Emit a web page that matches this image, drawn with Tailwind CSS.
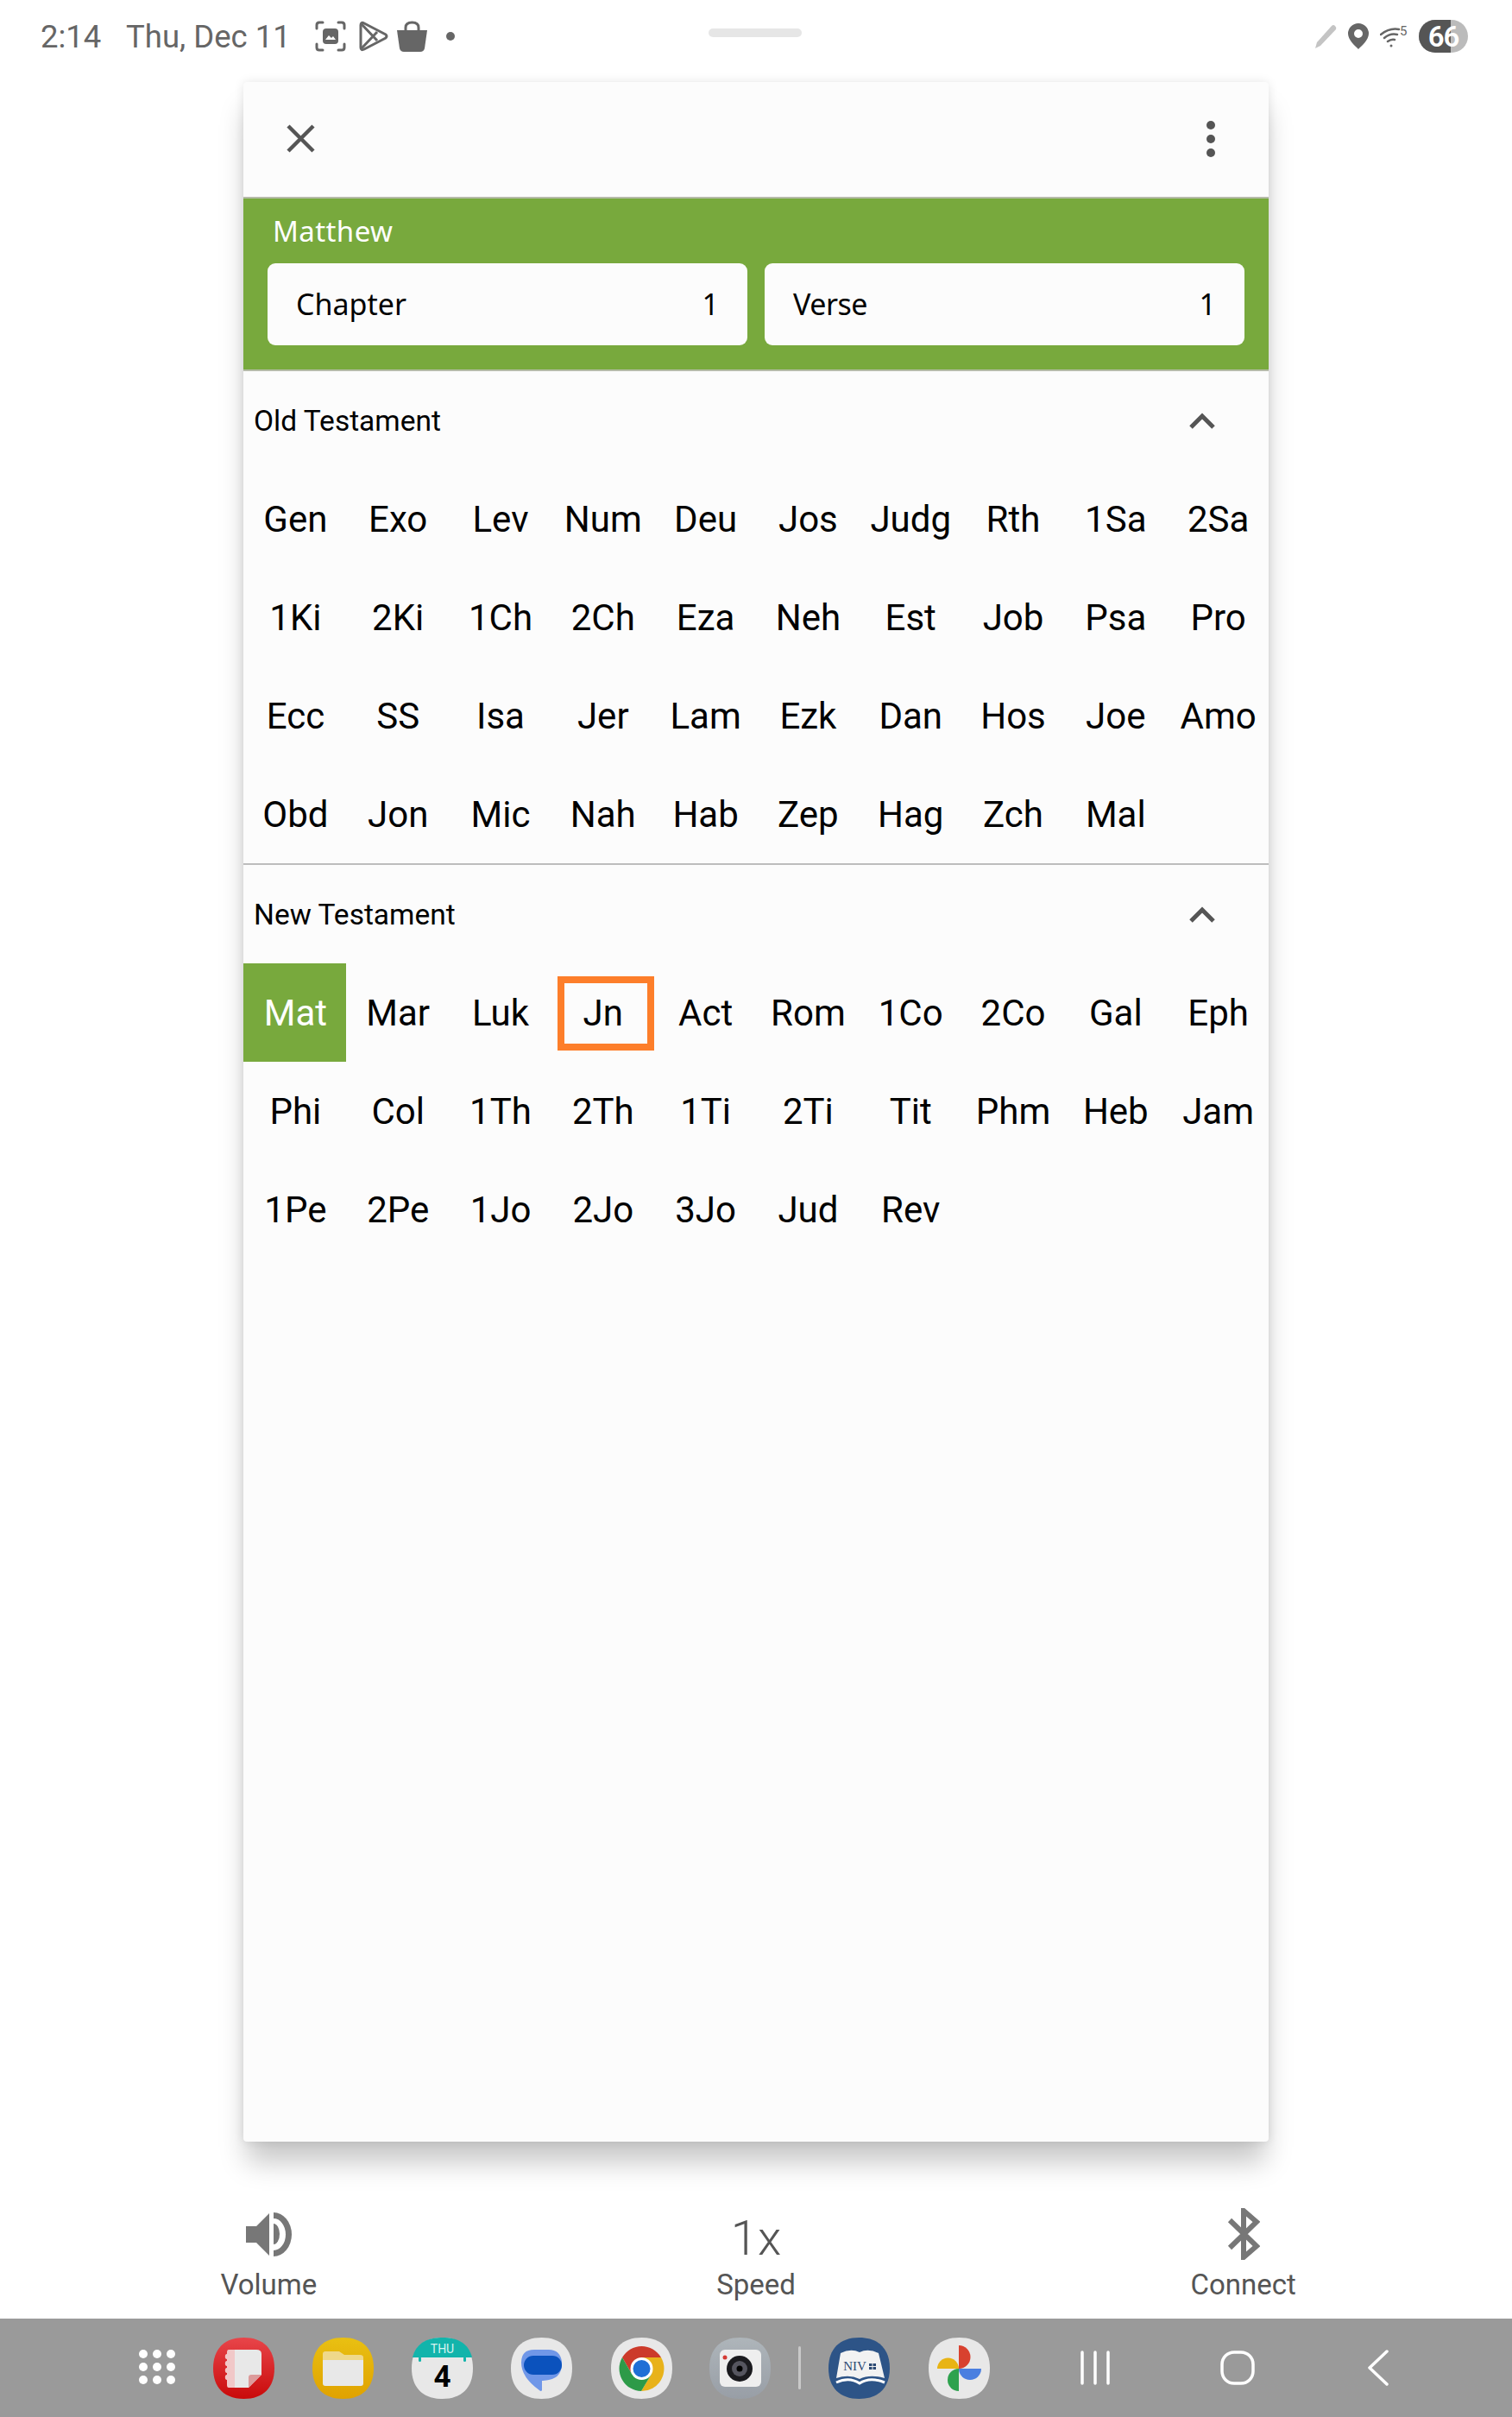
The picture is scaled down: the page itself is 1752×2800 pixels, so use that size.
<!doctype html>
<html><head><meta charset="utf-8"><script src="https://cdn.jsdelivr.net/npm/@tailwindcss/browser@4"></script></head>
<body class="bg-white">
<div class="w-[1752px] h-[2800px] flex flex-col relative overflow-hidden font-['Roboto',sans-serif] bg-white">
  <!-- status bar -->
  <div class="h-[95px] shrink-0 relative flex items-start pl-[47px] pr-[51px] pt-[23px] text-[#666]">
    <div class="flex items-center h-[38px] text-[36.500px]">
      <span class="w-[99px] pt-[2px]">2:14</span>
      <span class="w-[219px] pt-[2px]">Thu, Dec 11</span>
      <svg class="w-[36px] h-[36px]" viewBox="0 0 36 36" fill="none" stroke="#666" stroke-width="3" stroke-linecap="round"><path d="M2 9V5q0-3 3-3h4M27 2h4q3 0 3 3v4M34 27v4q0 3-3 3h-4M9 34H5q-3 0-3-3v-4"/><rect x="9" y="9" width="18" height="18" rx="4" fill="#666" stroke="none"/><path d="M12 22l4-5 3 3 2-2 3 4z" fill="#fff" stroke="none"/></svg>
      <svg class="w-[35px] h-[36px] ml-[14px]" viewBox="0 0 35 36" fill="none" stroke="#666" stroke-width="3" stroke-linejoin="round"><path d="M3 5q0-4 4-2l25 13q2 2 0 4L7 33q-4 2-4-2z"/><path d="M4 4l18 19M4 32l18-19"/></svg>
      <svg class="w-[35px] h-[36px] ml-[10px]" viewBox="0 0 35 36"><path d="M0 11h35l-3 21q-1 4-5 4H8q-4 0-5-4z" fill="#666"/><path d="M10 12V8q0-6 7.500-6T25 8v4" fill="none" stroke="#666" stroke-width="3"/></svg>
      <span class="w-[10px] h-[10px] rounded-full bg-[#666] ml-[22px]"></span>
    </div>
    <div class="absolute left-[821px] top-[33px] w-[108px] h-[10px] rounded-full bg-[#e6e6e6]"></div>
    <div class="ml-auto flex items-center h-[38px]">
      <svg class="w-[28px] h-[30px]" viewBox="0 0 28 30"><path d="M1 29l2-7L20 3q2-2 4 0t1 4L7 26z" fill="#c4c4c4"/></svg>
      <svg class="w-[24px] h-[30px] ml-[11px]" viewBox="0 0 24 30"><path fill-rule="evenodd" d="M12 0a12 12 0 0 1 12 12c0 7-8 14-12 18C8 26 0 19 0 12A12 12 0 0 1 12 0zm0 7a5 5 0 1 0 0 10 5 5 0 0 0 0-10z" fill="#666"/></svg>
      <svg class="w-[33px] h-[32px] ml-[13px]" viewBox="0 -3 33 32" fill="none" stroke="#666" stroke-width="2.500" stroke-linecap="round"><path d="M1 11q10-8 21-6M5 15q7-6 15-4M9 19q4-3 8-2"/><circle cx="13" cy="24" r="1.500" fill="#666" stroke="none"/><text x="23" y="12" fill="#666" stroke="none" font-size="15" class="font-['Roboto']">5</text></svg>
      <div class="relative w-[57px] h-[38px] ml-[12px] rounded-[19px] overflow-hidden bg-[#bbbbbb] flex items-center justify-center">
        <div class="absolute left-0 top-0 bottom-0 w-[37px] bg-[#555555]"></div>
        <span class="relative text-white text-[33px] font-semibold leading-none tracking-[-1px]">66</span>
      </div>
    </div>
  </div>
  <!-- modal -->
  <div class="w-[1188px] h-[2386px] shrink-0 ml-[282px] rounded-[4px] bg-[#fcfcfc] shadow-[0_0_12px_rgba(0,0,0,0.1),0_28px_30px_-4px_rgba(0,0,0,0.22)] flex flex-col">
    <div class="h-[133px] shrink-0 flex items-center justify-between pl-[50px] pr-[59px] pb-[2px]">
      <svg class="w-[33px] h-[33px]" viewBox="0 0 33 33" fill="none" stroke="#555" stroke-width="4.500"><path d="M2 2l29 29M31 2L2 31"/></svg>
      <svg class="w-[16px] h-[44px]" viewBox="0 0 16 44" fill="#555"><circle cx="8" cy="6" r="5"/><circle cx="8" cy="22" r="5"/><circle cx="8" cy="38" r="5"/></svg>
    </div>
    <div class="h-[202px] shrink-0 bg-[#78a93d] border-y-2 border-y-[#b5bba8] px-[28px] font-['Noto_Sans',sans-serif]">
      <div class="h-[75px] pl-[6px] pt-[15px] text-white text-[33px] leading-[45px] tracking-[0.4px]">Matthew</div>
      <div class="flex gap-[20px] text-black text-[34px]">
        <div class="w-[556px] h-[95px] rounded-[9px] bg-[#fcfcfc] flex items-center justify-between px-[33px]"><span>Chapter</span><span>1</span></div>
        <div class="w-[556px] h-[95px] rounded-[9px] bg-[#fcfcfc] flex items-center justify-between px-[33px]"><span class="tracking-[-0.5px]">Verse</span><span>1</span></div>
      </div>
    </div>
    <!-- Old -->
    <div class="h-[572px] shrink-0 border-b-2 border-b-[#bdbdbd]">
      <div class="h-[114px] flex items-center justify-between pl-[12px] pr-[61px] text-black text-[33.500px]">
        <span class="pt-[2px]">Old Testament</span>
        <svg class="w-[32px] h-[20px]" viewBox="0 0 32 20" fill="none" stroke="#555" stroke-width="5"><path d="M3 18L16 5l13 13"/></svg>
      </div>
      <div class="grid grid-cols-10 auto-rows-[114px] text-[42px] text-black text-center leading-[116px] indent-[2px]">
        <div>Gen</div><div>Exo</div><div>Lev</div><div>Num</div><div>Deu</div><div>Jos</div><div>Judg</div><div>Rth</div><div>1Sa</div><div>2Sa</div>
        <div>1Ki</div><div>2Ki</div><div>1Ch</div><div>2Ch</div><div>Eza</div><div>Neh</div><div>Est</div><div>Job</div><div>Psa</div><div>Pro</div>
        <div>Ecc</div><div>SS</div><div>Isa</div><div>Jer</div><div>Lam</div><div>Ezk</div><div>Dan</div><div>Hos</div><div>Joe</div><div>Amo</div>
        <div>Obd</div><div>Jon</div><div>Mic</div><div>Nah</div><div>Hab</div><div>Zep</div><div>Hag</div><div>Zch</div><div>Mal</div>
      </div>
    </div>
    <!-- New -->
    <div class="flex-1">
      <div class="h-[114px] flex items-center justify-between pl-[12px] pr-[61px] text-black text-[33.500px]">
        <span class="pt-[2px]">New Testament</span>
        <svg class="w-[32px] h-[20px]" viewBox="0 0 32 20" fill="none" stroke="#555" stroke-width="5"><path d="M3 18L16 5l13 13"/></svg>
      </div>
      <div class="grid grid-cols-10 auto-rows-[114px] text-[42px] text-black text-center leading-[116px] indent-[2px]">
        <div class="bg-[#78a93d] text-white">Mat</div><div>Mar</div><div>Luk</div>
        <div class="relative">Jn<span class="absolute left-[8px] top-[15px] w-[112px] h-[86px] border-[8px] border-[#fd7e2a]"></span></div>
        <div>Act</div><div>Rom</div><div>1Co</div><div>2Co</div><div>Gal</div><div>Eph</div>
        <div>Phi</div><div>Col</div><div>1Th</div><div>2Th</div><div>1Ti</div><div>2Ti</div><div>Tit</div><div>Phm</div><div>Heb</div><div>Jam</div>
        <div>1Pe</div><div>2Pe</div><div>1Jo</div><div>2Jo</div><div>3Jo</div><div>Jud</div><div>Rev</div>
      </div>
    </div>
  </div>
  <!-- controls -->
  <div class="flex-1 grid grid-cols-3 px-[29px] pt-[77px] text-[#555]">
    <div class="flex flex-col items-center">
      <div class="h-[60px] flex items-center"><svg class="w-[53px] h-[51px]" viewBox="0 0 53 51" fill="#777"><path d="M0 16H12L27 1V50L12 35H0Z"/><path d="M32 0A21 25.500 0 0 1 32 51V44A14 18.500 0 0 0 32 7Z"/><path d="M32 13A7 12 0 0 1 32 37Z"/></svg></div>
      <div class="text-[33px] leading-[40px] mt-[9px]">Volume</div>
    </div>
    <div class="flex flex-col items-center">
      <div class="h-[60px] flex items-end text-[56px] leading-[50px] font-light">1x</div>
      <div class="text-[33px] leading-[40px] mt-[9px]">Speed</div>
    </div>
    <div class="flex flex-col items-center">
      <div class="h-[60px] flex items-center"><svg class="w-[38px] h-[60px]" viewBox="0 0 38 60" fill="none" stroke="#777" stroke-width="6"><path d="M3 14L34 44 19 57V3L34 16 3 46"/></svg></div>
      <div class="text-[33px] leading-[40px] mt-[9px]">Connect</div>
    </div>
  </div>
  <!-- nav bar -->
  <div class="h-[114px] shrink-0 bg-[#9a9a9a] flex items-center pl-[159px]">
    <svg class="w-[48px] h-[46px] mr-[40px]" viewBox="0 0 48 46" fill="#fff"><circle cx="7" cy="7" r="5"/><circle cx="23" cy="7" r="5"/><circle cx="39" cy="7" r="5"/><circle cx="7" cy="22" r="5"/><circle cx="23" cy="22" r="5"/><circle cx="39" cy="22" r="5"/><circle cx="7" cy="37" r="5"/><circle cx="23" cy="37" r="5"/><circle cx="39" cy="37" r="5"/></svg>
    <div class="flex items-center gap-[44px]">
      <svg class="w-[71px] h-[71px]" viewBox="0 0 71 71"><defs><linearGradient id="gr" x1="0" y1="0" x2="0" y2="1"><stop offset="0" stop-color="#e8454a"/><stop offset="1" stop-color="#c90a0a"/></linearGradient><linearGradient id="gy" x1="0" y1="0" x2="0" y2="1"><stop offset="0" stop-color="#e9c012"/><stop offset="1" stop-color="#e0a200"/></linearGradient></defs><path d="M35.500 0C58 0 71 13 71 35.500S58 71 35.500 71 0 58 0 35.500 13 0 35.500 0z" fill="url(#gr)"/><path d="M25 14h25q6 0 6 5v24L41 58H25z" fill="#e8e8e8"/><path d="M18 14h7v44h-7q-2 0-2-3V17q0-3 2-3z" fill="#f1c8c8"/><circle cx="17" cy="22" r="3.200" fill="#f1c8c8"/><circle cx="17" cy="30" r="3.200" fill="#f1c8c8"/><circle cx="17" cy="38" r="3.200" fill="#f1c8c8"/><circle cx="17" cy="46" r="3.200" fill="#f1c8c8"/><path d="M41 58L56 43H44q-3 0-3 3z" fill="#dc9a9a"/></svg>
      <svg class="w-[71px] h-[71px]" viewBox="0 0 71 71"><path d="M35.500 0C58 0 71 13 71 35.500S58 71 35.500 71 0 58 0 35.500 13 0 35.500 0z" fill="url(#gy)"/><path d="M12 26v-7q0-3 3-3h16l6 4h18q4 0 4 3v3z" fill="#efd88a"/><path d="M12 26h47v27q0 3-3 3H15q-3 0-3-3z" fill="#e8e8e8"/></svg>
      <svg class="w-[71px] h-[71px]" viewBox="0 0 71 71"><path d="M35.500 0C58 0 71 13 71 35.500S58 71 35.500 71 0 58 0 35.500 13 0 35.500 0z" fill="#e8e8e8"/><path d="M1 23C5 7 17 0 35.500 0S66 7 70 23z" fill="#12b4ab"/><rect x="8" y="22" width="3" height="6" rx="1.500" fill="#12b4ab"/><rect x="60" y="22" width="3" height="6" rx="1.500" fill="#12b4ab"/><text x="35.500" y="18" text-anchor="middle" font-size="14" fill="#d7f3f0" class="font-['Roboto']">THU</text><text x="35.500" y="57" text-anchor="middle" font-size="35" font-weight="700" fill="#000" class="font-['Roboto']">4</text></svg>
      <svg class="w-[71px] h-[71px]" viewBox="0 0 71 71"><path d="M35.500 0C58 0 71 13 71 35.500S58 71 35.500 71 0 58 0 35.500 13 0 35.500 0z" fill="#e8e8e8"/><path d="M12 29q0-15 15-15h17q13 0 15 14 1 18-15 21-6 1-8 1v11q-1 2-3 0Q12 46 12 29z" fill="#7097e8"/><rect x="15" y="21" width="44" height="22" rx="11" fill="#0b52bd"/></svg>
      <svg class="w-[71px] h-[71px] ml-[1px] -mr-[1px]" viewBox="0 0 71 71"><path d="M35.500 0C58 0 71 13 71 35.500S58 71 35.500 71 0 58 0 35.500 13 0 35.500 0z" fill="#e8e8e8"/><path d="M13 23A26 26 0 0 1 58 23H35.500L24 42Z" fill="#cc3a2a"/><path d="M58 23A26 26 0 0 1 35 62L47 42 35.500 23Z" fill="#e8b21a"/><path d="M13 23L24 42H47L35 62A26 26 0 0 1 13 23Z" fill="#2d9a48"/><circle cx="35.500" cy="36" r="13" fill="#fff"/><circle cx="35.500" cy="36" r="10" fill="#1f6fd6"/></svg>
      <svg class="w-[71px] h-[71px]" viewBox="0 0 71 71"><defs><linearGradient id="gc" x1="0" y1="0" x2="0" y2="1"><stop offset="0" stop-color="#aeb5ba"/><stop offset="1" stop-color="#989ea6"/></linearGradient></defs><path d="M35.500 0C58 0 71 13 71 35.500S58 71 35.500 71 0 58 0 35.500 13 0 35.500 0z" fill="url(#gc)"/><rect x="12" y="14" width="48" height="43" rx="6" fill="#eeeeee"/><circle cx="18" cy="23" r="2.500" fill="#d43a34"/><circle cx="35" cy="36" r="15" fill="#1a1a1e"/><circle cx="35" cy="36" r="9" fill="#55555f"/><circle cx="35" cy="36" r="3.500" fill="#000"/></svg>
      <div class="w-[3px] h-[50px] bg-[#c9c9c9] rounded-full -mx-[12px]"></div>
      <svg class="w-[71px] h-[71px]" viewBox="0 0 71 71"><path d="M35.500 0C58 0 71 13 71 35.500S58 71 35.500 71 0 58 0 35.500 13 0 35.500 0z" fill="#2d5487"/><path d="M14 18Q26 12 36 17 46 12 58 18L65 47Q48 42 36 48 24 42 9 47Z" fill="#f2f2f2"/><path d="M9 52Q24 45 36 53 48 45 65 52" fill="none" stroke="#fff" stroke-width="3"/><text x="30.500" y="38" text-anchor="middle" font-size="15" fill="#2d4a73" class="font-['Liberation_Serif']">NIV</text><rect x="47" y="30" width="8" height="7" fill="#2d4a73"/><path d="M51 30v7M47 33.500h8" stroke="#f2f2f2" stroke-width="1"/></svg>
      <svg class="w-[71px] h-[71px] ml-[1px]" viewBox="0 0 71 71"><path d="M35.500 0C58 0 71 13 71 35.500S58 71 35.500 71 0 58 0 35.500 13 0 35.500 0z" fill="#e8e8e8"/><path d="M35 9A13.500 13.500 0 0 1 35 36Z" fill="#d8412f"/><path d="M35 36H61A13 13 0 0 1 35 36Z" fill="#4a7fe0"/><path d="M35 36V62A13 13 0 0 1 35 36Z" fill="#2ea24e"/><path d="M10 36A12.500 12.500 0 0 1 35 36Z" fill="#e8b414"/></svg>
    </div>
    <svg class="w-[36px] h-[40px] ml-[104px]" viewBox="0 0 36 40" fill="none" stroke="#fff" stroke-width="3.500" stroke-linecap="round"><path d="M3 2v36M18 2v36M33 2v36"/></svg>
    <svg class="w-[40px] h-[40px] ml-[127px]" viewBox="0 0 40 40" fill="none" stroke="#fff" stroke-width="3.500"><rect x="2" y="2" width="36" height="36" rx="14"/></svg>
    <svg class="w-[26px] h-[42px] ml-[130px]" viewBox="0 0 26 42" fill="none" stroke="#fff" stroke-width="3.500" stroke-linecap="round" stroke-linejoin="round"><path d="M23 2L3 21l20 19"/></svg>
  </div>
</div>
</body></html>
